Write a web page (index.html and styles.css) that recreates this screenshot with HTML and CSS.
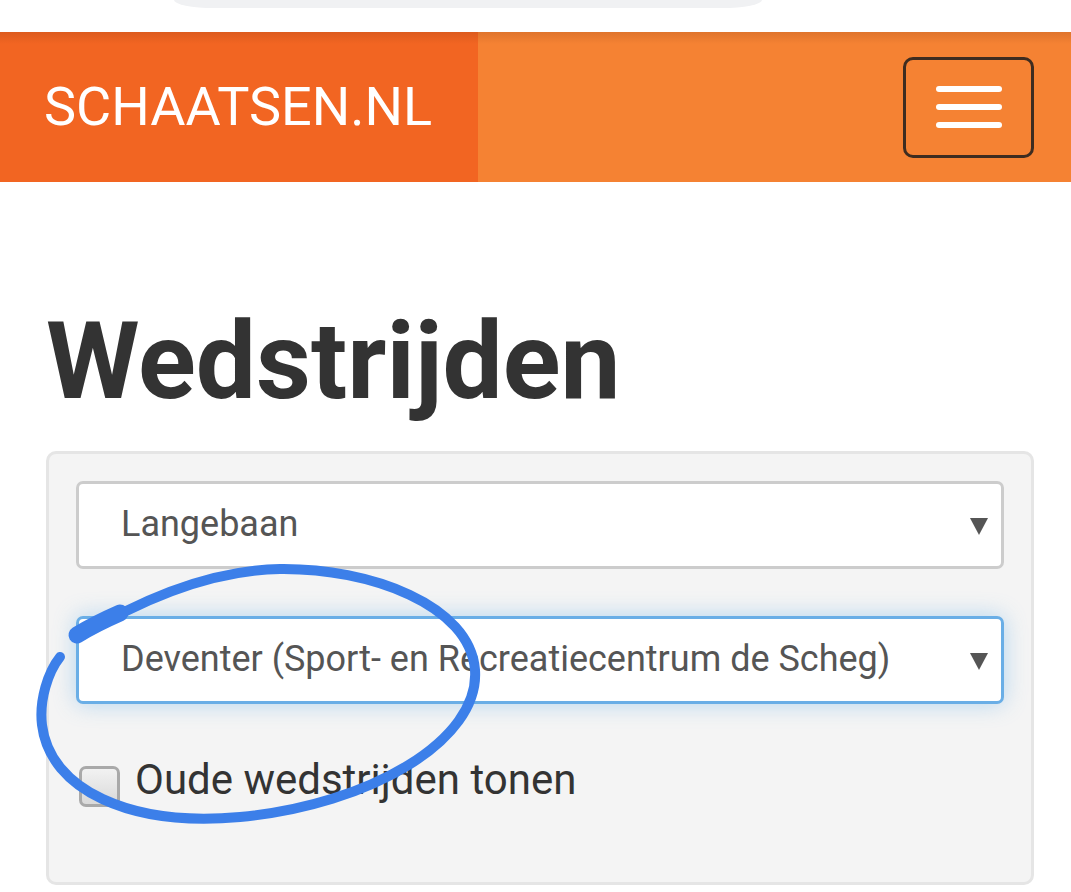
FILE: index.html
```html
<!DOCTYPE html>
<html lang="nl">
<head>
<meta charset="utf-8">
<title>Wedstrijden - Schaatsen.nl</title>
<link rel="stylesheet" href="styles.css">
</head>
<body>
<div class="topbar"><div class="pill"></div></div>
<header class="navbar">
  <div class="brand">SCHAATSEN.NL</div>
  <div class="nav-right">
    <button class="toggle" aria-label="Menu">
      <span class="bar"></span>
      <span class="bar"></span>
      <span class="bar"></span>
    </button>
  </div>
</header>
<main class="container">
  <h1 class="title">Wedstrijden</h1>
  <div class="well">
    <div class="select">
      <span class="select-text">Langebaan</span>
      <svg class="caret" width="18" height="17" viewBox="0 0 18 17"><polygon points="0,0 18,0 9,17" fill="#555"/></svg>
    </div>
    <div class="select select-focus">
      <span class="select-text">Deventer (Sport- en Recreatiecentrum de Scheg)</span>
      <svg class="caret" width="18" height="17" viewBox="0 0 18 17"><polygon points="0,0 18,0 9,17" fill="#555"/></svg>
    </div>
    <div class="check-row">
      <span class="checkbox"></span>
      <span class="check-label">Oude wedstrijden tonen</span>
    </div>
  </div>
</main>
<svg class="scribble" width="1071" height="892" viewBox="0 0 1071 892">
  <path d="M79,637 C140,600 210,570 280,569 C370,568 470,605 475,670 C480,740 370,805 240,817 C130,827 50,790 42,725 C39,700 48,672 60,657" fill="none" stroke="#3c7fe9" stroke-width="10" stroke-linecap="round"/>
  <path d="M77,635 C90,627 104,620 120,613" fill="none" stroke="#3c7fe9" stroke-width="17" stroke-linecap="round"/>
</svg>
</body>
</html>
```

FILE: styles.css
```css
html, body {
  margin: 0;
  padding: 0;
  background: #ffffff;
}
body {
  position: relative;
  width: 1071px;
  height: 892px;
  overflow: hidden;
  font-family: Roboto, "Noto Sans", sans-serif;
}
.topbar {
  height: 32px;
  background: #ffffff;
}
.pill {
  margin-left: 174px;
  width: 588px;
  height: 8px;
  background: #f0f1f3;
  border-radius: 0 0 40px 40px / 0 0 8px 8px;
}
.navbar {
  display: flex;
  height: 150px;
}
.brand {
  width: 478px;
  box-sizing: border-box;
  padding-left: 44px;
  display: flex;
  align-items: center;
  font-size: 54px;
  line-height: 1;
  color: #ffffff;
  background: linear-gradient(rgba(90, 30, 0, 0.14), rgba(90, 30, 0, 0) 12px), #f26522;
}
.nav-right {
  flex: 1;
  display: flex;
  align-items: center;
  justify-content: flex-end;
  padding-right: 37px;
  background: linear-gradient(rgba(90, 30, 0, 0.14), rgba(90, 30, 0, 0) 12px), #f58233;
}
.toggle {
  width: 131px;
  height: 101px;
  box-sizing: border-box;
  border: 3px solid #3e2c20;
  border-radius: 10px;
  background: transparent;
  display: flex;
  flex-direction: column;
  align-items: center;
  justify-content: center;
  gap: 12px;
  padding: 0;
  margin-top: 0;
}
.bar {
  display: block;
  width: 66px;
  height: 6px;
  border-radius: 3px;
  background: #ffffff;
}
.container {
  padding: 0 37px 0 46px;
}
.title {
  margin: 120px 0 30px 0;
  font-size: 107px;
  line-height: 119px;
  font-weight: 700;
  color: #333333;
}
.well {
  background: #f4f4f4;
  border: 3px solid #e5e5e5;
  border-radius: 10px;
  padding: 27px 27px 75px 27px;
}
.select {
  height: 88px;
  box-sizing: border-box;
  border: 3px solid #cccccc;
  border-radius: 7px;
  background: #ffffff;
  display: flex;
  align-items: center;
  justify-content: space-between;
  padding: 0 13px 0 42px;
  font-size: 36px;
  color: #555555;
}
.select-focus {
  margin-top: 47px;
  border-color: #6aaee6;
  box-shadow: 0 0 22px rgba(102, 175, 233, 0.45);
}
.select-text {
  line-height: 1.2;
}
.caret {
  display: block;
  margin-top: 2px;
}
.check-row {
  display: flex;
  align-items: flex-start;
  margin-top: 51px;
}
.checkbox {
  display: block;
  width: 41px;
  height: 41px;
  box-sizing: border-box;
  margin: 11px 0 0 3px;
  border: 3px solid #a9a9a9;
  border-radius: 7px;
  background: linear-gradient(#f2f2f2, #d9d9d9);
}
.check-label {
  margin-left: 15px;
  font-size: 42px;
  line-height: 50px;
  color: #333333;
}
.scribble {
  position: absolute;
  left: 0;
  top: 0;
  pointer-events: none;
}
```
